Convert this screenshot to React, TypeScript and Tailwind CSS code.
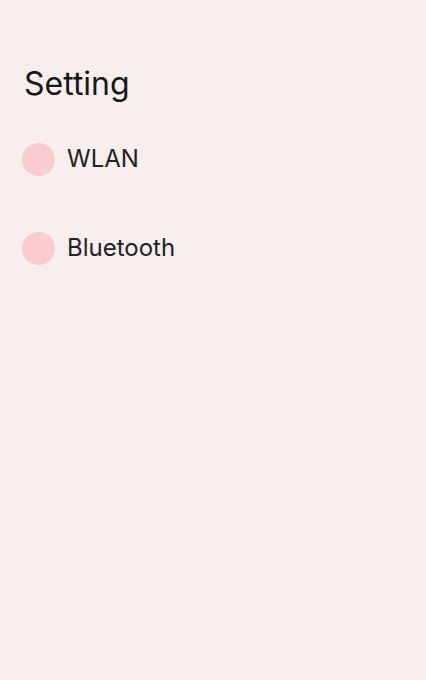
import React from "react";

export default function App() {
  const items = ["WLAN", "Bluetooth"];
  return (
    <div className="w-[426px] h-[680px] bg-[#f8eeee] font-['Inter',sans-serif]">
      <div className="pt-[64px] pl-[24px] text-[32px] leading-[40px] text-[#181818]">Setting</div>
      <div className="mt-[38px] flex flex-col gap-[55px] pl-[22px]">
        {items.map((t) => (
          <div key={t} className="flex items-center h-[34px]">
            <div className="w-[33px] h-[33px] rounded-full bg-[#f9cdd0]" />
            <span className="ml-[12px] text-[24px] text-[#222222]">{t}</span>
          </div>
        ))}
      </div>
    </div>
  );
}
